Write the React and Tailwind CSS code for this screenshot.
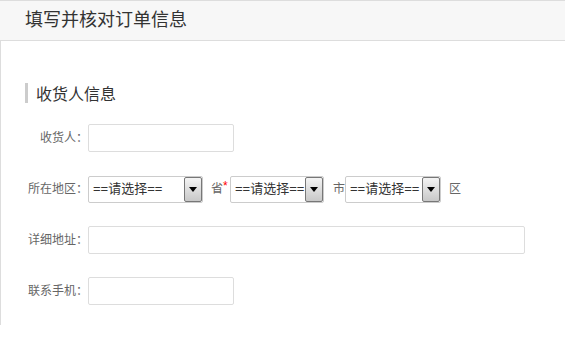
import React from 'react';

const font = { fontFamily: '"Liberation Sans", "Noto Sans CJK SC", sans-serif' };

function Select({ width }) {
  return (
    <div className={`flex h-[27px] items-center border border-[#ccc] rounded-[2px] bg-white ${width}`}>
      <span className="flex-1 pl-[4px] text-[13px] text-[#333] whitespace-nowrap overflow-hidden">==请选择==</span>
      <span className="flex h-[25px] w-[18px] items-center justify-center border border-[#777] rounded-[2px] bg-gradient-to-b from-[#f4f4f4] to-[#c8c8c8]">
        <svg width="8" height="5" viewBox="0 0 8 5">
          <path d="M0 0h8L4 5z" fill="#000" />
        </svg>
      </span>
    </div>
  );
}

function Row({ label, children }) {
  return (
    <div className="flex h-[28px] items-center">
      <span className="w-[63px] text-right text-[12px] text-[#666]">{label}</span>
      {children}
    </div>
  );
}

export default function App() {
  return (
    <div className="w-[565px] h-[355px] bg-white" style={font}>
      <div className="h-[41px] flex items-center border-t border-b border-[#ddd] bg-[#f7f7f7] px-[25px]">
        <h1 className="text-[18px] text-[#333]">填写并核对订单信息</h1>
      </div>

      <div className="h-[284px] border-l border-[#ddd] pl-[24px] pt-[42px]">
        <div className="flex h-[20px] items-end gap-[8px]">
          <span className="h-[20px] w-[3px] bg-[#ccc]" />
          <h2 className="text-[16px] leading-[16px] text-[#333]">收货人信息</h2>
        </div>

        <div className="mt-[21px] flex flex-col gap-[23px]">
          <Row label="收货人：">
            <div className="h-[28px] w-[146px] border border-[#ddd] rounded-[2px]" />
          </Row>

          <Row label="所在地区：">
            <Select width="w-[115px]" />
            <span className="ml-[8px] text-[12px] text-[#666]">省</span>
            <span className="w-[7px] self-start mt-[2px] text-[12px] text-[#f00]">*</span>
            <Select width="w-[94px]" />
            <span className="ml-[9px] w-[12px] text-[12px] text-[#666]">市</span>
            <Select width="w-[96px]" />
            <span className="ml-[8px] text-[12px] text-[#666]">区</span>
          </Row>

          <Row label="详细地址：">
            <div className="h-[28px] w-[437px] border border-[#ddd] rounded-[2px]" />
          </Row>

          <Row label="联系手机：">
            <div className="h-[28px] w-[146px] border border-[#ddd] rounded-[2px]" />
          </Row>
        </div>
      </div>
    </div>
  );
}
